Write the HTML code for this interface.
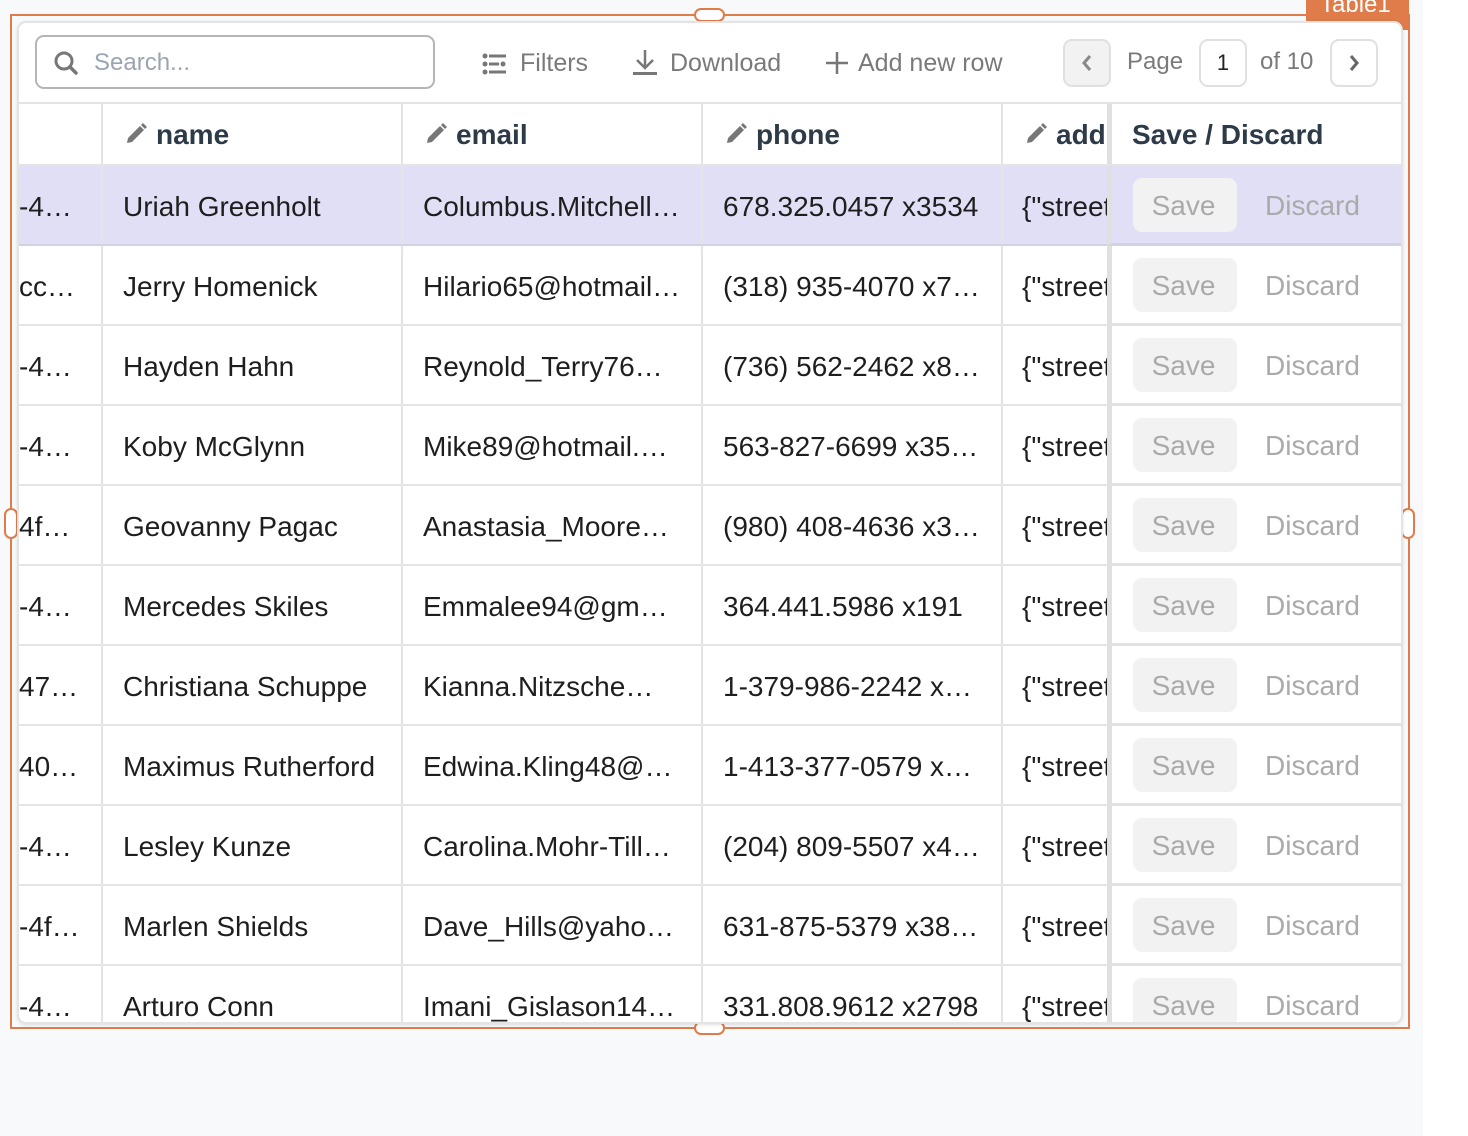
<!DOCTYPE html>
<html><head><meta charset="utf-8"><style>
*{box-sizing:border-box;margin:0;padding:0}
body{width:1468px;height:1136px;background:#fff;position:relative;overflow:hidden;font-family:"Liberation Sans",Arial,sans-serif}
.bg{position:absolute;left:0;top:0;width:1423px;height:1136px;background:#f8f9fb}
.sel{position:absolute;left:10px;top:14px;width:1400px;height:1015px;border:2px solid #e07b4a}
.lbl{position:absolute;left:1294px;top:-16px;width:103px;height:30px;background:#e07b4a;color:#fff;font-size:24px;line-height:10px;padding-left:14px;overflow:hidden}
.h{position:absolute;background:#fff;border:2px solid #e07b4a;border-radius:7px}
.card{position:absolute;left:17px;top:21px;width:1386px;height:1003px;background:#fff;border:2px solid #e4e4e4;border-radius:9px;overflow:hidden;box-shadow:0 1px 3px rgba(0,0,0,.12)}
.a{position:absolute}
.tb{font-size:25px;color:#7a7a7a;white-space:nowrap}
.hd{position:absolute;top:79px;left:0;width:1400px;height:64px;border-top:2px solid #e4e4e4;border-bottom:2px solid #e4e4e4;font-size:28px;font-weight:bold;color:#2d3a48}
.row{position:absolute;left:0;width:1400px;height:80px;border-bottom:2px solid #e6e6e6;font-size:28px;color:#1e1e1e}
.c{position:absolute;top:0;height:100%;line-height:81px;white-space:nowrap;overflow:hidden;border-right:2px solid #e4e4e4}
.sd{position:absolute;left:1088px;top:0;width:296px;height:80px;background:#fff;border-left:5px solid #e0e0e0;border-bottom:3px solid #e2e2e2}
.sv{position:absolute;left:21px;top:12px;width:104px;height:54px;background:#f2f2f2;border-radius:9px;color:#aaa;font-size:28px;line-height:56px;text-align:center;text-indent:-3px}
.dc{position:absolute;left:153px;top:12px;line-height:56px;color:#aaa;font-size:28px}
.pen{display:inline-block;vertical-align:-2px;margin-right:8px}
</style></head><body>
<div class="bg"></div>
<div class="sel"><div class="lbl">Table1</div></div>
<div class="h" style="left:694px;top:8px;width:31px;height:14px"></div>
<div class="h" style="left:694px;top:1021px;width:31px;height:14px"></div>
<div class="h" style="left:4px;top:508px;width:14px;height:31px"></div>
<div class="h" style="left:1401px;top:508px;width:14px;height:31px"></div>
<div class="card">
 <div class="a" style="left:16px;top:12px;width:400px;height:54px;border:2px solid #b5b5b5;border-radius:9px">
  <svg class="a" style="left:16px;top:13px" width="26" height="26" viewBox="0 0 26 26"><circle cx="11" cy="11" r="8" fill="none" stroke="#777" stroke-width="3"/><path d="M17 17l6 6" stroke="#777" stroke-width="3.5" stroke-linecap="round"/></svg>
  <span class="a" style="left:57px;top:12px;font-size:24px;color:#9aa4b2">Search...</span>
 </div>
 <svg class="a" style="left:463px;top:30px" width="26" height="22" viewBox="0 0 26 22"><g fill="#777"><circle cx="3" cy="3" r="2.5"/><circle cx="3" cy="11" r="2.5"/><circle cx="3" cy="19" r="2.5"/><rect x="7" y="1.5" width="17" height="3"/><rect x="7" y="9.5" width="10" height="3"/><circle cx="21" cy="11" r="2.5"/><rect x="7" y="17.5" width="17" height="3"/></g></svg>
 <span class="a tb" style="left:501px;top:26px">Filters</span>
 <svg class="a" style="left:613px;top:25px" width="26" height="28" viewBox="0 0 26 28"><path d="M13 2v17M5 12l8 8 8-8" fill="none" stroke="#777" stroke-width="2.5"/><rect x="1" y="24" width="24" height="3" fill="#777"/></svg>
 <span class="a tb" style="left:651px;top:26px">Download</span>
 <svg class="a" style="left:806px;top:28px" width="24" height="24" viewBox="0 0 24 24"><path d="M12 1v22M1 12h22" stroke="#777" stroke-width="2.5"/></svg>
 <span class="a tb" style="left:839px;top:26px">Add new row</span>
 <div class="a" style="left:1044px;top:16px;width:48px;height:48px;border:2px solid #e0e0e0;border-radius:9px;background:#f2f2f2"><svg class="a" style="left:14px;top:12px" width="16" height="20" viewBox="0 0 16 20"><path d="M11 3l-6 7 6 7" fill="none" stroke="#888" stroke-width="3"/></svg></div>
 <span class="a tb" style="left:1108px;top:25px;font-size:24px">Page</span>
 <div class="a" style="left:1180px;top:16px;width:48px;height:48px;border:2px solid #e0e0e0;border-radius:9px;font-size:22px;color:#222;text-align:center;line-height:44px">1</div>
 <span class="a tb" style="left:1241px;top:25px;font-size:24px">of 10</span>
 <div class="a" style="left:1311px;top:16px;width:48px;height:48px;border:2px solid #e0e0e0;border-radius:9px"><svg class="a" style="left:14px;top:12px" width="16" height="20" viewBox="0 0 16 20"><path d="M5 3l6 7-6 7" fill="none" stroke="#666" stroke-width="3"/></svg></div>

 <div class="hd">
  <div class="c" style="left:0;width:84px;line-height:62px"></div>
  <div class="c" style="left:84px;width:300px;line-height:62px;padding-left:21px"><svg class="pen" width="24" height="24" viewBox="0 0 24 24"><path d="M3 21l1-5L16 4l4 4L8 20z" fill="#777"/><path d="M17 3l2-2 4 4-2 2z" fill="#777"/></svg>name</div>
  <div class="c" style="left:384px;width:300px;line-height:62px;padding-left:21px"><svg class="pen" width="24" height="24" viewBox="0 0 24 24"><path d="M3 21l1-5L16 4l4 4L8 20z" fill="#777"/><path d="M17 3l2-2 4 4-2 2z" fill="#777"/></svg>email</div>
  <div class="c" style="left:684px;width:300px;line-height:62px;padding-left:21px"><svg class="pen" width="24" height="24" viewBox="0 0 24 24"><path d="M3 21l1-5L16 4l4 4L8 20z" fill="#777"/><path d="M17 3l2-2 4 4-2 2z" fill="#777"/></svg>phone</div>
  <div class="c" style="left:984px;width:104px;line-height:62px;padding-left:21px;border:none"><svg class="pen" width="24" height="24" viewBox="0 0 24 24"><path d="M3 21l1-5L16 4l4 4L8 20z" fill="#777"/><path d="M17 3l2-2 4 4-2 2z" fill="#777"/></svg>address</div>
  <div class="c" style="left:1088px;width:296px;line-height:62px;padding-left:20px;border:none;border-left:5px solid #e0e0e0;background:#fff">Save / Discard</div>
 </div>

 <div class="row" style="top:143px;background:#e1dff6;border-bottom-color:#d3d1e4"><div class="c" style="left:0;width:84px">-4…</div><div class="c" style="left:84px;width:300px;padding-left:20px">Uriah Greenholt</div><div class="c" style="left:384px;width:300px;padding-left:20px">Columbus.Mitchell…</div><div class="c" style="left:684px;width:300px;padding-left:20px">678.325.0457 x3534</div><div class="c" style="left:984px;width:104px;padding-left:19px;border:none">{"street</div><div class="sd" style="background:#e1dff6;border-bottom-color:#d3d1e4"><div class="sv">Save</div><div class="dc">Discard</div></div></div>
 <div class="row" style="top:223px"><div class="c" style="left:0;width:84px">cc…</div><div class="c" style="left:84px;width:300px;padding-left:20px">Jerry Homenick</div><div class="c" style="left:384px;width:300px;padding-left:20px">Hilario65@hotmail…</div><div class="c" style="left:684px;width:300px;padding-left:20px">(318) 935-4070 x7…</div><div class="c" style="left:984px;width:104px;padding-left:19px;border:none">{"street</div><div class="sd"><div class="sv">Save</div><div class="dc">Discard</div></div></div>
 <div class="row" style="top:303px"><div class="c" style="left:0;width:84px">-4…</div><div class="c" style="left:84px;width:300px;padding-left:20px">Hayden Hahn</div><div class="c" style="left:384px;width:300px;padding-left:20px">Reynold_Terry76…</div><div class="c" style="left:684px;width:300px;padding-left:20px">(736) 562-2462 x8…</div><div class="c" style="left:984px;width:104px;padding-left:19px;border:none">{"street</div><div class="sd"><div class="sv">Save</div><div class="dc">Discard</div></div></div>
 <div class="row" style="top:383px"><div class="c" style="left:0;width:84px">-4…</div><div class="c" style="left:84px;width:300px;padding-left:20px">Koby McGlynn</div><div class="c" style="left:384px;width:300px;padding-left:20px">Mike89@hotmail.…</div><div class="c" style="left:684px;width:300px;padding-left:20px">563-827-6699 x35…</div><div class="c" style="left:984px;width:104px;padding-left:19px;border:none">{"street</div><div class="sd"><div class="sv">Save</div><div class="dc">Discard</div></div></div>
 <div class="row" style="top:463px"><div class="c" style="left:0;width:84px">4f…</div><div class="c" style="left:84px;width:300px;padding-left:20px">Geovanny Pagac</div><div class="c" style="left:384px;width:300px;padding-left:20px">Anastasia_Moore…</div><div class="c" style="left:684px;width:300px;padding-left:20px">(980) 408-4636 x3…</div><div class="c" style="left:984px;width:104px;padding-left:19px;border:none">{"street</div><div class="sd"><div class="sv">Save</div><div class="dc">Discard</div></div></div>
 <div class="row" style="top:543px"><div class="c" style="left:0;width:84px">-4…</div><div class="c" style="left:84px;width:300px;padding-left:20px">Mercedes Skiles</div><div class="c" style="left:384px;width:300px;padding-left:20px">Emmalee94@gm…</div><div class="c" style="left:684px;width:300px;padding-left:20px">364.441.5986 x191</div><div class="c" style="left:984px;width:104px;padding-left:19px;border:none">{"street</div><div class="sd"><div class="sv">Save</div><div class="dc">Discard</div></div></div>
 <div class="row" style="top:623px"><div class="c" style="left:0;width:84px">47…</div><div class="c" style="left:84px;width:300px;padding-left:20px">Christiana Schuppe</div><div class="c" style="left:384px;width:300px;padding-left:20px">Kianna.Nitzsche…</div><div class="c" style="left:684px;width:300px;padding-left:20px">1-379-986-2242 x…</div><div class="c" style="left:984px;width:104px;padding-left:19px;border:none">{"street</div><div class="sd"><div class="sv">Save</div><div class="dc">Discard</div></div></div>
 <div class="row" style="top:703px"><div class="c" style="left:0;width:84px">40…</div><div class="c" style="left:84px;width:300px;padding-left:20px">Maximus Rutherford</div><div class="c" style="left:384px;width:300px;padding-left:20px">Edwina.Kling48@…</div><div class="c" style="left:684px;width:300px;padding-left:20px">1-413-377-0579 x…</div><div class="c" style="left:984px;width:104px;padding-left:19px;border:none">{"street</div><div class="sd"><div class="sv">Save</div><div class="dc">Discard</div></div></div>
 <div class="row" style="top:783px"><div class="c" style="left:0;width:84px">-4…</div><div class="c" style="left:84px;width:300px;padding-left:20px">Lesley Kunze</div><div class="c" style="left:384px;width:300px;padding-left:20px">Carolina.Mohr-Till…</div><div class="c" style="left:684px;width:300px;padding-left:20px">(204) 809-5507 x4…</div><div class="c" style="left:984px;width:104px;padding-left:19px;border:none">{"street</div><div class="sd"><div class="sv">Save</div><div class="dc">Discard</div></div></div>
 <div class="row" style="top:863px"><div class="c" style="left:0;width:84px">-4f…</div><div class="c" style="left:84px;width:300px;padding-left:20px">Marlen Shields</div><div class="c" style="left:384px;width:300px;padding-left:20px">Dave_Hills@yaho…</div><div class="c" style="left:684px;width:300px;padding-left:20px">631-875-5379 x38…</div><div class="c" style="left:984px;width:104px;padding-left:19px;border:none">{"street</div><div class="sd"><div class="sv">Save</div><div class="dc">Discard</div></div></div>
 <div class="row" style="top:943px"><div class="c" style="left:0;width:84px">-4…</div><div class="c" style="left:84px;width:300px;padding-left:20px">Arturo Conn</div><div class="c" style="left:384px;width:300px;padding-left:20px">Imani_Gislason14…</div><div class="c" style="left:684px;width:300px;padding-left:20px">331.808.9612 x2798</div><div class="c" style="left:984px;width:104px;padding-left:19px;border:none">{"street</div><div class="sd"><div class="sv">Save</div><div class="dc">Discard</div></div></div>
</div>
</body></html>
